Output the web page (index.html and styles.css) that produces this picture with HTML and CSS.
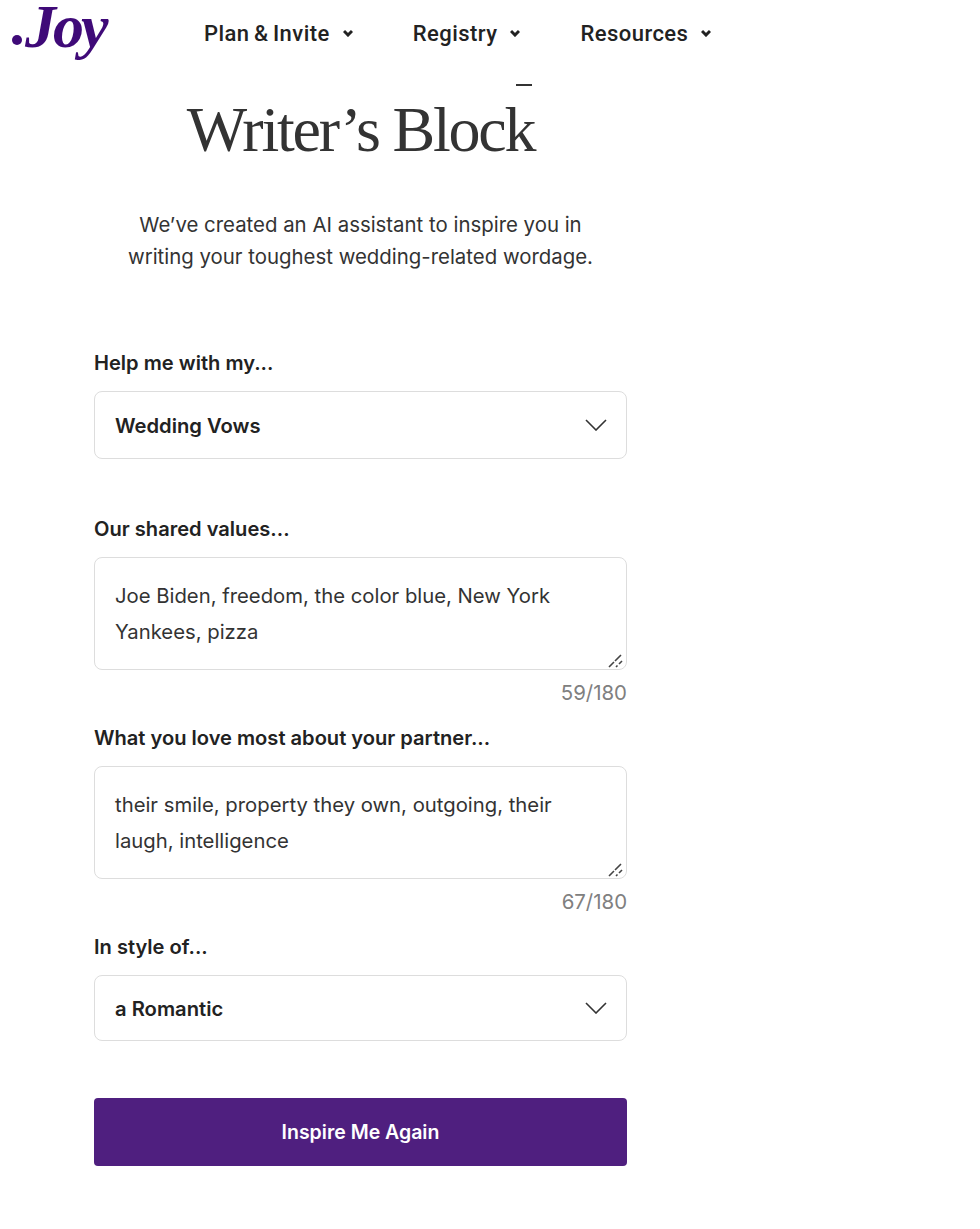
FILE: index.html
```html
<!DOCTYPE html>
<html>
  <head>
    <title>Joy - Writer's Block</title>
    <link rel="stylesheet" href="styles.css">
  </head>
  <body class="body">
    <nav class="nav">
      <a class="logo"><span class="logo-dot"></span>Joy</a>
      <ul class="nav-links">
        <li class="nav-link">Plan &amp; Invite <svg class="caret" viewBox="0 0 10 8"><path d="M1 2l4 4 4-4"/></svg></li>
        <li class="nav-link">Registry <svg class="caret" viewBox="0 0 10 8"><path d="M1 2l4 4 4-4"/></svg></li>
        <li class="nav-link">Resources <svg class="caret" viewBox="0 0 10 8"><path d="M1 2l4 4 4-4"/></svg></li>
      </ul>
    </nav>
    <main class="main">
      <div class="clipped-line"><span class="clipped-tail"></span></div>
      <h1 class="title">Writer’s Block</h1>
      <p class="intro">We’ve created an AI assistant to inspire you in<br>writing your toughest wedding-related wordage.</p>
      <form class="form">
        <label class="label">Help me with my...</label>
        <div class="select select-tall">
          <span>Wedding Vows</span>
          <svg class="chevron" viewBox="0 0 22 12"><path d="M1 1l10 10L21 1"/></svg>
        </div>
        <label class="label label-gap">Our shared values...</label>
        <div class="area-wrap">
          <textarea class="area">Joe Biden, freedom, the color blue, New York Yankees, pizza</textarea>
          <svg class="grip" viewBox="0 0 18 16"><path d="M2 15l5-5M8 9l6-6M9 15l1.500-1.500M12 12l3-3"/></svg>
        </div>
        <div class="count">59/180</div>
        <label class="label">What you love most about your partner...</label>
        <div class="area-wrap">
          <textarea class="area">their smile, property they own, outgoing, their laugh, intelligence</textarea>
          <svg class="grip" viewBox="0 0 18 16"><path d="M2 15l5-5M8 9l6-6M9 15l1.500-1.500M12 12l3-3"/></svg>
        </div>
        <div class="count">67/180</div>
        <label class="label">In style of...</label>
        <div class="select">
          <span>a Romantic</span>
          <svg class="chevron" viewBox="0 0 22 12"><path d="M1 1l10 10L21 1"/></svg>
        </div>
        <button class="button" type="button">Inspire Me Again</button>
      </form>
    </main>
  </body>
</html>
```

FILE: styles.css
```css
.body {
  margin: 0;
  height: 1229px;
  background: #fff;
  color: #2b2b2b;
  font-family: "Inter", "Liberation Sans", sans-serif;
  overflow: hidden;
}
.nav {
  display: flex;
  align-items: flex-start;
  height: 84px;
}
.logo {
  display: block;
  position: relative;
  width: 204px;
  height: 66px;
  padding-left: 25px;
  box-sizing: border-box;
  font-family: "Liberation Serif", serif;
  font-style: italic;
  font-weight: bold;
  font-size: 62px;
  line-height: 52px;
  letter-spacing: -3px;
  color: #3f0a78;
}
.logo-dot {
  position: absolute;
  left: 12px;
  top: 35px;
  width: 10px;
  height: 10px;
  border-radius: 50%;
  background: #3f0a78;
}
.nav-links {
  display: flex;
  gap: 60px;
  height: 66px;
  margin: 0;
  padding: 0;
  list-style: none;
}
.nav-link {
  display: flex;
  align-items: center;
  gap: 13px;
  font-family: "Roboto", sans-serif;
  font-weight: 500;
  font-size: 22px;
  letter-spacing: 0.45px;
  word-spacing: -1.5px;
  color: #222;
}
.caret {
  width: 10px;
  height: 8px;
  fill: none;
  stroke: #222;
  stroke-width: 3;
}
.main {
  width: 533px;
  margin-left: 94px;
}
.clipped-line {
  height: 16px;
  text-align: center;
}
.clipped-tail {
  display: inline-block;
  width: 16px;
  height: 2px;
  margin-left: 326px;
  vertical-align: top;
  background: #333;
}
.title {
  margin: 0;
  text-align: center;
  font-family: "Liberation Serif", serif;
  font-weight: normal;
  font-size: 64px;
  line-height: 60px;
  letter-spacing: -2.2px;
  color: #333;
}
.intro {
  margin: 49px 0 0;
  text-align: center;
  font-size: 20.400px;
  line-height: 32px;
  color: #333;
}
.form {
  display: flex;
  flex-direction: column;
  margin-top: 79px;
}
.label {
  font-size: 20.100px;
  font-weight: 600;
  line-height: 22px;
  color: #222;
  margin-bottom: 17px;
}
.label-gap {
  margin-top: 59px;
}
.select {
  display: flex;
  align-items: center;
  justify-content: space-between;
  box-sizing: border-box;
  height: 66px;
  padding: 0 19px 0 20px;
  border: 1px solid #ddd;
  border-radius: 8px;
  font-size: 20.200px;
  font-weight: 600;
  color: #222;
}
.select-tall {
  height: 68px;
}
.chevron {
  width: 22px;
  height: 12px;
  fill: none;
  stroke: #333;
  stroke-width: 1.6;
}
.area-wrap {
  position: relative;
  height: 113px;
}
.area {
  display: block;
  box-sizing: border-box;
  width: 533px;
  height: 113px;
  padding: 20px 20px 0;
  border: 1px solid #ddd;
  border-radius: 8px;
  font-family: inherit;
  font-size: 20.300px;
  line-height: 36px;
  color: #333;
  outline: none;
  resize: none;
}
.grip {
  position: absolute;
  right: 2px;
  bottom: 2px;
  width: 18px;
  height: 16px;
  fill: none;
  stroke: #444;
  stroke-width: 1.600;
}
.count {
  margin: 11px 0 22px;
  text-align: right;
  font-size: 20.400px;
  line-height: 24px;
  color: #808080;
}
.button {
  height: 68px;
  margin-top: 57px;
  border: none;
  border-radius: 4px;
  background: #4f1f7f;
  color: #fff;
  font-family: inherit;
  font-size: 19.500px;
  font-weight: 600;
}
```
